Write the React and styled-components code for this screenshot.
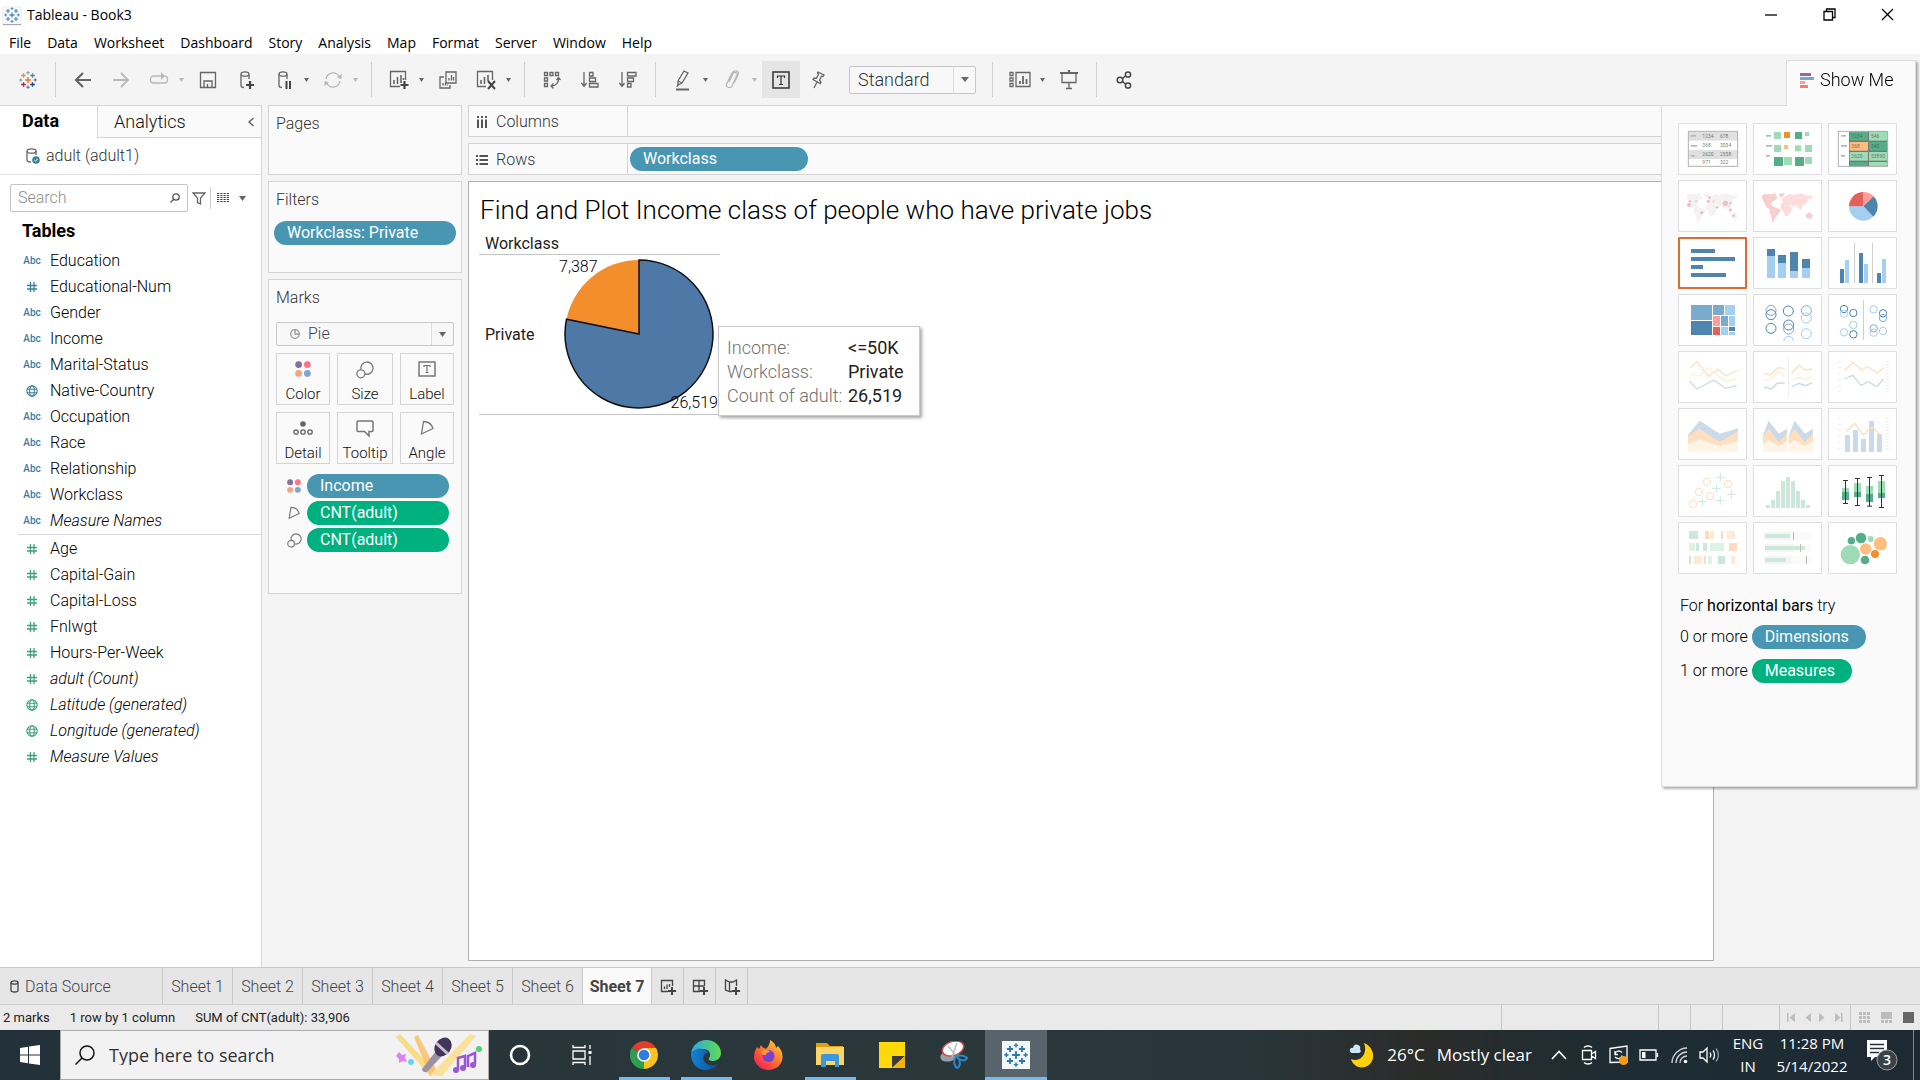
import React from "react";
import styled, { createGlobalStyle } from "styled-components";

const UI = `Roboto, "Liberation Sans", sans-serif`;
const WIN = `"Open Sans", "Noto Sans", sans-serif`;

const BLUE = "#4996b2";
const GREEN = "#00b180";
const LINE = "#d4d4d4";

const Global = createGlobalStyle`
  *, *::before, *::after { box-sizing: border-box; }
  body { margin: 0; background: #f4f4f4; font-family: ${UI}; font-size: 16px; font-weight: 300; line-height: 20px; color: #222; overflow: hidden; }
  button, input, select { font: inherit; color: inherit; margin: 0; }
  button { background: none; border: 0; padding: 0; cursor: pointer; }
  ul { list-style: none; margin: 0; padding: 0; }
  h1, h2, p { margin: 0; font-weight: inherit; font-size: inherit; }
  svg { display: block; flex: none; }
`;

/* ---------- frame ---------- */
const Page = styled.div`
  position: relative;
  height: 100vh;
  display: flex;
  flex-direction: column;
`;
const TitleBar = styled.header`
  height: 29px;
  display: flex;
  align-items: center;
  gap: 6px;
  padding-left: 3px;
  background: #fff;
  color: #000;
  font: 14px/20px ${WIN};
`;
const WindowButtons = styled.div`
  margin: 0 4px 0 auto;
  display: flex;
`;
const WindowButton = styled.button`
  width: 58px;
  height: 28px;
  display: grid;
  place-items: center;
`;
const MenuBar = styled.nav`
  height: 25px;
  display: flex;
  align-items: center;
  padding: 2px 0 0 1px;
  background: #fff;
  font: 14px/20px ${WIN};
  color: #000;
`;
const MenuItem = styled.button`
  padding: 0 8px;
`;
const Toolbar = styled.div`
  height: 51px;
  display: flex;
  align-items: center;
  padding-left: 9px;
  color: #666;
`;
const ToolButton = styled.button`
  width: 38px;
  height: 37px;
  display: grid;
  place-items: center;
  color: ${(p) => (p.$dim ? "#b8b8b8" : "#666")};
  background: ${(p) => (p.$on ? "#e5e5e5" : "none")};
`;
const CaretButton = styled.button`
  width: 11px;
  height: 37px;
  display: grid;
  place-items: center start;
  padding-left: 1px;
  color: ${(p) => (p.$dim ? "#b8b8b8" : "#666")};
`;
const Sep = styled.span`
  width: 1px;
  height: 35px;
  margin: 0 8px;
  background: #d0d0d0;
`;
const SelectBox = styled.label`
  display: flex;
  align-items: center;
  position: relative;
  background: #f8f8f8;
  border: 1px solid #c8c8c8;
  border-radius: 2px;
`;
const FitBox = styled(SelectBox)`
  width: 127px;
  height: 28px;
  margin: 0 8px 0 11px;
  font-size: 18px;
  color: #333;
`;
const PlainSelect = styled.select`
  appearance: none;
  flex: 1;
  min-width: 0;
  height: 100%;
  border: 0;
  outline: 0;
  background: none;
  padding: 0 8px;
`;
const SelectCaret = styled.span`
  width: 22px;
  align-self: stretch;
  display: grid;
  place-items: center;
  border-left: 1px solid #ddd;
  color: #666;
  pointer-events: none;
`;

const Body = styled.div`
  flex: 1;
  min-height: 0;
  display: flex;
`;

/* ---------- data pane ---------- */
const DataPane = styled.aside`
  width: 262px;
  background: #fff;
  border: 1px solid ${LINE};
  border-width: 1px 1px 0 0;
  color: #111;
`;
const PaneTabs = styled.div`
  display: flex;
  height: 32px;
  font-size: 18px;
`;
const PaneTab = styled.button`
  width: 97px;
  padding: 0 0 2px 22px;
  text-align: left;
  font-weight: 700;
  color: #000;
`;
const PaneTabOff = styled.button`
  flex: 1;
  display: flex;
  align-items: center;
  justify-content: space-between;
  padding: 0 6px 0 16px;
  background: #fafafa;
  border: 1px solid ${LINE};
  border-width: 0 0 1px 1px;
  color: #111;
`;
const SourceRow = styled.div`
  height: 37px;
  display: flex;
  align-items: center;
  gap: 6px;
  padding-left: 26px;
  border-bottom: 1px solid #e0e0e0;
  color: #333;
`;
const SearchRow = styled.div`
  display: flex;
  align-items: center;
  padding: 9px 0 0 10px;
`;
const SearchBox = styled.label`
  width: 178px;
  height: 28px;
  display: flex;
  align-items: center;
  padding: 0 7px;
  border: 1px solid #c4c4c4;
  border-radius: 2px;
`;
const SearchInput = styled.input`
  flex: 1;
  min-width: 0;
  border: 0;
  outline: 0;
  padding: 0;
  background: none;
  &::placeholder { color: #8c8c8c; opacity: 1; }
`;
const SmallIconButton = styled.button`
  width: ${(p) => p.$w}px;
  height: 22px;
  display: grid;
  place-items: center;
  color: #666;
  border-left: ${(p) => (p.$line ? "1px solid #ccc" : "0")};
`;
const TablesHeading = styled.h2`
  padding: 9px 22px 7px;
  font-size: 18px;
  font-weight: 700;
  color: #000;
`;
const FieldList = styled.ul`
  margin-left: 18px;
  padding-top: ${(p) => (p.$measures ? 1 : 0)}px;
  border-top: ${(p) => (p.$measures ? "1px solid #d8d8d8" : "0")};
  color: ${(p) => (p.$measures ? "#3fa27c" : "#38809f")};
`;
const Field = styled.li`
  height: 26px;
  display: grid;
  grid-template-columns: 28px 1fr;
  align-items: center;
  column-gap: 4px;
`;
const FieldIcon = styled.span`
  display: grid;
  place-items: center;
  font-size: 10px;
  font-weight: 500;
  line-height: 12px;
`;
const FieldName = styled.span`
  color: #000;
  font-style: ${(p) => (p.$italic ? "italic" : "normal")};
`;

/* ---------- shelf cards ---------- */
const Cards = styled.section`
  width: 194px;
  margin-left: 6px;
  display: flex;
  flex-direction: column;
  gap: 6px;
`;
const Card = styled.div`
  min-height: ${(p) => p.$h}px;
  background: #fafafa;
  border: 1px solid ${LINE};
  padding: 8px 5px;
`;
const CardTitle = styled.h2`
  padding-left: 2px;
  color: #333;
`;
const Pill = styled.button`
  height: 24px;
  display: block;
  padding: 0 ${(p) => p.$end || 13}px 0 13px;
  border-radius: 12px;
  background: ${(p) => (p.$green ? GREEN : BLUE)};
  color: #fff;
  font-weight: 400;
  text-align: left;
  white-space: nowrap;
`;
const FilterPill = styled(Pill)`
  width: 100%;
  margin-top: 11px;
`;
const MarksBody = styled.div`
  padding: 0 2px;
`;
const MarkBox = styled(SelectBox)`
  height: 24px;
  margin: 14px 0 7px;
  padding-left: 13px;
  color: #444;
`;
const MarkGrid = styled.div`
  display: grid;
  grid-template-columns: 54px 56px 54px;
  gap: 7px;
`;
const MarkButton = styled.button`
  height: 52px;
  display: flex;
  flex-direction: column;
  align-items: center;
  justify-content: space-between;
  padding: 7px 0 0;
  border: 1px solid ${LINE};
  font-size: 15px;
  color: #111;
`;
const Encodings = styled.ul`
  margin-top: 10px;
  display: grid;
  gap: 3px;
`;
const Encoding = styled.li`
  display: grid;
  grid-template-columns: 14px 142px;
  gap: 6px;
  align-items: center;
  padding-left: 11px;
`;

/* ---------- worksheet ---------- */
const Work = styled.main`
  flex: 1;
  min-width: 0;
  display: flex;
  flex-direction: column;
  gap: 6px;
  margin: 0 206px 6px 6px;
`;
const Shelf = styled.div`
  height: 32px;
  display: flex;
  align-items: center;
  background: #fafafa;
  border: 1px solid ${LINE};
`;
const ShelfLabel = styled.div`
  width: 159px;
  align-self: stretch;
  display: flex;
  align-items: center;
  gap: 8px;
  padding: 2px 0 0 7px;
  margin-right: 2px;
  border-right: 1px solid ${LINE};
  color: #333;
`;
const ShelfPill = styled(Pill)`
  width: 178px;
`;
const Canvas = styled.div`
  flex: 1;
  background: #fff;
  border: 1px solid #b0b0b0;
  padding: 12px 10px 11px;
`;
const SheetTitle = styled.h1`
  padding-left: 1px;
  font-size: 26px;
  line-height: 32px;
  color: #000;
`;
const Viz = styled.div`
  position: relative;
  width: 241px;
  margin-top: 8px;
  border-bottom: 1px solid #c4c4c4;
`;
const VizHeader = styled.div`
  height: 21px;
  padding-left: 6px;
  border-bottom: 1px solid #c4c4c4;
  font-weight: 400;
`;
const VizRow = styled.div`
  display: grid;
  grid-template-columns: 73px 1fr;
  align-items: center;
  padding-left: 6px;
`;
const VizLabel = styled.span`
  font-weight: 400;
`;
const Tip = styled.dl`
  position: absolute;
  left: 239px;
  top: 92px;
  width: 202px;
  height: 90px;
  margin: 0;
  padding: 9px 8px;
  display: grid;
  grid-template-columns: 121px 1fr;
  grid-auto-rows: 24px;
  align-items: center;
  background: #fff;
  border: 1px solid #c8c8c8;
  box-shadow: 2px 2px 3px rgba(0, 0, 0, 0.35);
  font-size: 18px;
  white-space: nowrap;
`;
const TipKey = styled.dt`
  color: #707070;
`;
const TipValue = styled.dd`
  margin: 0;
  font-weight: 400;
`;

/* ---------- show me ---------- */
const ShowMe = styled.section`
  position: absolute;
  top: 60px;
  right: 4px;
  width: 255px;
  display: flex;
  flex-direction: column;
  filter: drop-shadow(2px 2px 1px rgba(0, 0, 0, 0.3));
  color: #000;
`;
const ShowMeTab = styled.button`
  align-self: flex-end;
  width: 130px;
  height: 46px;
  margin-bottom: -1px;
  z-index: 1;
  display: flex;
  align-items: center;
  gap: 6px;
  padding: 0 0 7px 13px;
  background: #fafafa;
  border: 1px solid #dcdcdc;
  border-bottom: 0;
  font-size: 18px;
`;
const ShowMePanel = styled.div`
  min-height: 682px;
  padding: 17px 16px;
  background: #fafafa;
  border: 1px solid #dcdcdc;
`;
const ThumbGrid = styled.div`
  display: grid;
  grid-template-columns: repeat(3, 69px);
  gap: 5px 6px;
  margin-bottom: 18px;
`;
const Thumb = styled.button`
  height: 52px;
  background: #fff;
  box-shadow: inset 0 0 0 ${(p) => (p.$on ? "2px #dd6b36" : "1px #dedede")};
  border-radius: 1px;
`;
const Hint = styled.p`
  display: flex;
  align-items: center;
  gap: 4px;
  padding-left: 2px;
  height: ${(p) => p.$h || 34}px;
`;

/* ---------- sheet tabs and status ---------- */
const SheetTabs = styled.nav`
  height: 37px;
  display: flex;
  background: #e6e6e6;
  border-top: 1px solid #c8c8c8;
  color: #444;
`;
const SheetTab = styled.button`
  min-width: ${(p) => p.$w}px;
  display: flex;
  align-items: center;
  justify-content: ${(p) => (p.$start ? "flex-start" : "center")};
  gap: 6px;
  padding: 1px ${(p) => (p.$start ? 10 : 0)}px 0;
  border-right: 1px solid #c8c8c8;
  background: ${(p) => (p.$on ? "#fafafa" : "none")};
  font-weight: ${(p) => (p.$on ? 700 : 300)};
`;
const StatusBar = styled.footer`
  height: 26px;
  display: flex;
  align-items: center;
  gap: 20px;
  padding-left: 3px;
  background: #eaeaea;
  border-top: 1px solid #d0d0d0;
  font-size: 13px;
  font-weight: 400;
`;
const StatusCells = styled.div`
  margin-left: auto;
  align-self: stretch;
  display: flex;
`;
const StatusCell = styled.div`
  width: ${(p) => p.$w}px;
  display: flex;
  align-items: center;
  justify-content: ${(p) => (p.$spread ? "space-between" : "space-evenly")};
  padding: 0 ${(p) => (p.$spread ? 6 : 0)}px 0 ${(p) => (p.$spread ? 8 : 0)}px;
  border-left: 1px solid #c4c4c4;
  color: #bcbcbc;
`;

/* ---------- taskbar ---------- */
const Taskbar = styled.footer`
  height: 50px;
  display: flex;
  background: linear-gradient(90deg, #22313a, #2a373b 40%, #28353a 65%, #2b2c2a 74%, #1e2c34 84%, #1d2a33);
  color: #fff;
  font-family: ${WIN};
  font-weight: 400;
`;
const StartButton = styled.button`
  width: 60px;
  display: grid;
  place-items: center;
`;
const TaskSearch = styled.label`
  width: 429px;
  display: flex;
  align-items: center;
  gap: 14px;
  padding: 0 4px 0 14px;
  background: #f2f2f2;
  border: 1px solid #a9a9a9;
  color: #222;
`;
const TaskInput = styled.input`
  flex: 1;
  min-width: 0;
  border: 0;
  outline: 0;
  padding: 0;
  background: none;
  font-size: 18px;
  &::placeholder { color: #333; opacity: 1; }
`;
const TaskApp = styled.button`
  width: 62px;
  display: grid;
  place-items: center;
  background: ${(p) => (p.$on ? "#57646b" : "none")};
  background-image: ${(p) => (p.$run ? "linear-gradient(#76b9ed, #76b9ed)" : "none")};
  background-size: ${(p) => (p.$on ? 62 : 51)}px 3px;
  background-position: bottom center;
  background-repeat: no-repeat;
`;
const Tray = styled.div`
  margin-left: auto;
  display: flex;
  align-items: center;
`;
const Weather = styled.button`
  display: flex;
  align-items: center;
  gap: 12px;
  margin-right: 12px;
  font-size: 17px;
  color: #fff;
`;
const TrayIcon = styled.button`
  width: 30px;
  height: 50px;
  display: grid;
  place-items: center;
  color: #fff;
`;
const TrayText = styled.button`
  width: ${(p) => p.$w}px;
  color: #fff;
  font-size: ${(p) => p.$size || 16}px;
  line-height: 23px;
`;
const Notify = styled.button`
  width: 62px;
  display: grid;
  place-items: center;
  padding-right: 2px;
  margin-right: 6px;
  height: 50px;
  border-right: 1px solid #7d868a;
`;

/* ---------- icons ---------- */
const Svg = ({ w = 18, h = w, vb, sw = 1.3, children, ...rest }) => (
  <svg width={w} height={h} viewBox={vb || `0 0 ${w} ${h}`} fill="none" stroke="currentColor" strokeWidth={sw} aria-hidden="true" {...rest}>
    {children}
  </svg>
);
const Caret = ({ w = 5 }) => (
  <svg width={w} height={w === 5 ? 4 : 5} viewBox="0 0 8 5" preserveAspectRatio="none" fill="currentColor" aria-hidden="true"><path d="M0 0h8L4 5z" /></svg>
);
const plus = (x, y, r, c, key, s = 1.2) => (
  <path key={key} d={`M${x - r} ${y}h${2 * r}M${x} ${y - r}v${2 * r}`} stroke={c} strokeWidth={s} />
);
const TableauMark = ({ size = 18, mono }) => {
  const c = mono ? Array(9).fill(mono) : ["#e8762c", "#5b879b", "#eb912c", "#59879b", "#c72035", "#1f447e", "#7099a6", "#5c6692", "#7199a6"];
  return (
    <Svg w={size} vb="0 0 20 20">
      {plus(10, 10, 3.2, c[0], "a", 1.6)}
      {plus(10, 2, 1.8, c[6], "b")}
      {plus(10, 18, 1.8, c[7], "c")}
      {plus(2, 10, 1.8, c[8], "d")}
      {plus(18, 10, 1.8, c[7], "e")}
      {plus(5, 5, 2.6, c[2], "f", 1.5)}
      {plus(15, 5, 2.6, c[3], "g", 1.5)}
      {plus(5, 15, 2.6, c[4], "h", 1.5)}
      {plus(15, 15, 2.6, c[5], "i", 1.5)}
    </Svg>
  );
};
const AppBadge = styled.span`
  width: 18px;
  height: 18px;
  display: grid;
  place-items: center;
  background: #f4f6f8;
  box-shadow: 0 1px 1px #aaa;
`;
const Dots = ({ w = 16 }) => (
  <svg width={w} height={w} viewBox="0 0 16 16" aria-hidden="true">
    <circle cx="3.6" cy="3.6" r="3.4" fill="#866f9c" /><circle cx="12.4" cy="3.6" r="3.4" fill="#fc7480" />
    <circle cx="3.6" cy="12.4" r="3.4" fill="#f3a57d" /><circle cx="12.4" cy="12.4" r="3.4" fill="#7fa5cf" />
  </svg>
);
const SizeIcon = ({ w = 18 }) => (
  <Svg w={w} vb="0 0 18 18" color="#777"><path d="M5 8.4A6.1 6.1 0 1 1 9 12.9" /><circle cx="4.9" cy="12.8" r="4" /></Svg>
);
const AngleIcon = ({ w = 16 }) => (
  <Svg w={w} vb="0 0 16 16" color="#777"><path d="M4.500 1.500 2.500 14 14 8.500C12.500 4 8.500 1.500 4.500 1.500z" /></Svg>
);
const Hash = () => <Svg w={12} sw={1.3}><path d="M4.500 1v10M8 1v10M1 4.500h10M1 8h10" /></Svg>;
const Globe = () => (
  <Svg w={12} sw={1.1}><circle cx="6" cy="6" r="5.200" /><ellipse cx="6" cy="6" rx="2.300" ry="5.200" /><path d="M1 4.200h10M1 7.800h10" /></Svg>
);
const DbSmall = ({ children, ...p }) => (
  <Svg w={20} h={20} {...p}>
    <path d="M5 4.200v11.600c0 1 1.200 1.600 3 1.700M13 4.200V9" /><ellipse cx="9" cy="4" rx="4" ry="2.200" />{children}
  </Svg>
);
const PlusBadge = ({ x, y }) => <path d={`M${x - 4} ${y}h8M${x} ${y - 4}v8`} strokeWidth="2.200" stroke="#444" />;

const I = {
  back: <Svg w={18} sw={2.200}><path d="M17 9H2M9 2 2 9l7 7" /></Svg>,
  fwd: <Svg w={18} sw={1.800}><path d="M1 9h15M9 2l7 7-7 7" /></Svg>,
  redo: <Svg w={20}><path d="M11 6H4.500a3 3 0 0 0-3 3v1a3 3 0 0 0 3 3h11a3 3 0 0 0 3-3V9a3 3 0 0 0-2.500-3M11 6h4" /><path d="m12 2 4 4-4 4z" fill="currentColor" stroke="none" /></Svg>,
  save: <Svg w={18}><path d="M1.500 1.500h15v15h-15z" /><path d="M5 16v-6h8v6M8.500 16v-3" /></Svg>,
  dbplus: <DbSmall><PlusBadge x={14} y={15} /></DbSmall>,
  dbpause: <DbSmall><path d="M12.500 11v8M16 11v8" stroke="#444" strokeWidth="2" /></DbSmall>,
  refresh: <Svg w={18}><path d="M2 8a7 7 0 0 1 13-2.500M16 10a7 7 0 0 1-13 2.500" /><path d="M17.500 3v5l-4.500-1.500zM.5 15v-5L5 11.500z" fill="currentColor" stroke="none" /></Svg>,
  newws: <Svg w={20}><path d="M11 16.500H1.500v-15h15V10" /><path d="M5 14v-4M8.500 14V7M12 13V5M14.500 10V8" strokeWidth="1.600" /><PlusBadge x={15.5} y={15} /></Svg>,
  dup: <Svg w={18}><path d="M7 1h10v11H7z" /><path d="M5 6H1v11h10v-3M10 9.500V7M12.500 9.500V4M14.500 9.500V6M4 14.500V12M6.500 14.500v-3M8.500 14.500v-1" /></Svg>,
  clear: <Svg w={20}><path d="M10 16.500H1.500v-15h15V10" /><path d="M5 14v-4M8.500 14V7M12 11V5" strokeWidth="1.600" /><path d="m12 11 7 8m0-8-7 8" stroke="#444" strokeWidth="2" /></Svg>,
  swap: <Svg w={18}><path d="M1.500 1.500h3v3h-3zM7 1.500h3v3H7zM12.500 1.500h3v3h-3zM1.500 7h3v3h-3zM1.500 12.500h3v3h-3z" /><path d="M15.500 7c.5 5-3 8-7 8M13.500 9l2-2.500 2 2.500M10.500 12.500 8 15l2.500 2.500" /></Svg>,
  asc: <Svg w={18}><path d="M3 1v14M.5 12 3 15.500 5.500 12M8.500 1.500h3.500V5H8.500zM8.500 7h6v3.500h-6zM8.500 12.500H17V16H8.500z" /></Svg>,
  desc: <Svg w={18}><path d="M3 1v14M.5 12 3 15.500 5.500 12M8.500 1.500H17V5H8.500zM8.500 7h6v3.500h-6zM8.500 12.500H12V16H8.500z" /></Svg>,
  pen: <Svg w={18} h={22}><path d="m4 12 6-10 4 2-6 10-4 2zM4 12l4 2" /><path d="M4 15.500 3 18" /><path d="M2 20.500h13" strokeWidth="2" /></Svg>,
  clip: <Svg w={16} h={20}><path d="m5 12 4-8.500c1-2 5-1 4 1.500L8 16c-1.500 3-7 1-5.500-2L8 3c1-2.500 6-3 6.500 0 .3 1.500-4 9-4.500 10" /></Svg>,
  label: <Svg w={18} color="#333" sw={1.500}><path d="M1 1h16v16H1z" /><path d="M5.500 7V5h7v2M9 5v8.500M7 13.500h4" strokeWidth="1.200" /></Svg>,
  pin: <Svg w={16} h={20}><path d="m7 2 6 3-1 1.500-1.500-.3-2 4 1.500 2-.7 1.300L2 9.500 3 8l2.500.3 2-4L6.500 3zM6 12l-3 6" /></Svg>,
  cards: <Svg w={22} h={18}><path d="M1 1.500h3v3H1zM1 7h3v3H1zM1 12.500h3v3H1zM7 1.500h14v14H7z" /><path d="M11 13v-3M14 13V5M17.500 13V8" strokeWidth="1.800" /></Svg>,
  present: <Svg w={18} h={20}><path d="M0 3h18M9 0v3" strokeWidth="2.200" /><path d="M2 4v8.500h14V4M9 12.500V18M6 18.500h6" /></Svg>,
  share: <Svg w={16} h={20} color="#444" sw={1.500}><circle cx="4" cy="10" r="2.800" /><circle cx="12" cy="4.500" r="2.600" /><circle cx="12" cy="15.500" r="2.600" /><path d="m6.500 8.500 3-2.500M6.500 11.500l3 2.500" /></Svg>,
};
const tools = [
  ["Start page", <TableauMark />, "s"],
  ["Back", I.back], ["Forward", I.fwd, "d"], ["Redo", I.redo, "dc"], ["Save", I.save], ["New data source", I.dbplus],
  ["Pause updates", I.dbpause, "c"], ["Refresh", I.refresh, "dcs"],
  ["New worksheet", I.newws, "c"], ["Duplicate", I.dup], ["Clear sheet", I.clear, "cs"],
  ["Swap rows and columns", I.swap], ["Sort ascending", I.asc], ["Sort descending", I.desc, "s"],
  ["Highlight", I.pen, "c"], ["Group members", I.clip, "dc"], ["Show mark labels", I.label, "o"], ["Fix axes", I.pin],
];
const tools2 = [["Show cards", I.cards, "c"], ["Presentation mode", I.present, "s"], ["Share", I.share]];
const Tool = ({ item: [label, icon, f = ""] }) => (
  <>
    <ToolButton aria-label={label} $dim={f.includes("d")} $on={f.includes("o")}>{icon}</ToolButton>
    {f.includes("c") && <CaretButton aria-label={`${label} options`} $dim={f.includes("d")}><Caret /></CaretButton>}
    {f.includes("s") && <Sep />}
  </>
);

/* ---------- show me thumbnails, drawn in a 207 x 156 space ---------- */
const D = "#4e84ae", M = "#7baacf", L = "#a4cff0", G = "#55ad89", g = "#9edcb5", O = "#f28e2b", o = "#ffbe7d";
const rects = (list) => list.map(([x, y, w, h, c], i) => <rect key={i} x={x} y={y} width={w} height={h} fill={c} />);
const lines = (list, w = 4) => list.map(([pts, c], i) => <polyline key={i} points={pts} fill="none" stroke={c} strokeWidth={w} />);
const polys = (list, dx = 0) => list.map(([pts, c], i) => <polygon key={i} points={pts} fill={c} transform={`translate(${dx} 0)`} />);
const rings = (list, r, w = 3) => list.map(([x, y, c], i) => <circle key={i} cx={x} cy={y} r={r} fill="none" stroke={c} strokeWidth={w} />);
const words = (list) => list.map(([x, y, t], i) => <text key={i} x={x} y={y} fontSize="15" fontWeight="400" fill="#555" fillOpacity=".8">{t}</text>);
const dashes = (list) => list.map(([x, y, w], i) => <rect key={i} x={x} y={y} width={w} height="5" fill="#b5b5b5" />);
const ticks = [...Array(6)].map((_, i) => [30, 30 + i * 18, 9, 2, "#e6e6e6"]).concat([...Array(11)].map((_, i) => [174, 30 + i * 9, 9, 2, "#e6e6e6"]));
const west = "M26 48l8-6 22 1 8-3 6 2-3 6 8 4-8 8-6 2-8 10 4 5 6 4 16 6 4 6-10 12-8 12-3 10-4-1-3-16-6-12 3-8-12-10-8-14-4-8zM76 41l20-1-6 10-8 2z";
const east = "M92 52l12-6 8-4 10 3 20-5 18 6 20 2-4 8-10 0-4 12-12 6-4 12-8 2-4-8-6-6-4 10-8-10-6 0 6 10-4 14-10 10-6 0-6-16-8-6 2-14 6-6-4-6z";
const oz = "M158 104l12-8 10 12-6 8-14-2z";
const sliceOf = (cx, cy, r, a, b) => {
  const p = (d) => `${cx + r * Math.sin((d * Math.PI) / 180)} ${cy - r * Math.cos((d * Math.PI) / 180)}`;
  return `M${cx} ${cy}L${p(a)}A${r} ${r} 0 ${b - a > 180 ? 1 : 0} 1 ${p(b)}z`;
};
const lOr = "#ffdfbf", lYe = "#fff0d3", lBl = "#cbdae8", lGr = "#cce8db", pGr = "#def2e7", pOr = "#ffead6";
const twin = [["30,81 47,38 78,77 102,62 102,132 30,132", lBl], ["30,86 47,62 78,103 102,76 102,132 30,132", lOr], ["30,108 47,96 78,114 102,99 102,132 30,132", "#fff4e6"]];
const thumbs = [
  ["Text table", <>{rects([[31, 26, 148, 27, "#e0e0e0"], [31, 81, 148, 27, "#e0e0e0"]])}{dashes([[38, 36, 16], [38, 66, 19], [38, 96, 13]])}{words([[73, 46, "1234"], [126, 46, "678"], [73, 73, "368"], [126, 73, "3034"], [73, 100, "2620"], [126, 100, "2558"], [73, 124, "971"], [126, 124, "322"]])}<rect x="31" y="25" width="148" height="105" fill="none" stroke="#b0b0b0" strokeWidth="3" /></>],
  ["Heat map", <>{dashes([[39, 36, 15], [39, 66, 18], [39, 96, 12]])}{rects([[63, 27, 21, 21, g], [93, 27, 18, 18, O], [126, 27, 21, 21, G], [156, 27, 12, 12, g], [63, 66, 21, 21, g], [93, 66, 12, 12, o], [126, 67, 18, 18, g], [156, 66, 21, 21, g], [63, 102, 27, 27, G], [93, 102, 24, 24, g], [126, 102, 27, 27, G], [156, 102, 21, 21, g]])}</>],
  ["Highlight table", <>{rects([[63, 25, 116, 106, "#777"], [65, 27, 55, 26, G], [123, 27, 55, 26, g], [65, 57, 55, 26, o], [123, 57, 55, 26, G], [65, 87, 55, 26, g], [123, 87, 55, 26, g], [65, 117, 55, 13, G], [123, 117, 55, 13, g]])}{dashes([[39, 36, 15], [39, 66, 18], [39, 96, 12]])}{words([[70, 45, "1234"], [129, 45, "546"], [70, 76, "368"], [129, 76, "340"], [70, 106, "2620"], [129, 106, "53890"]])}<rect x="31" y="25" width="148" height="105" fill="none" stroke="#b0b0b0" strokeWidth="3" /></>],
  ["Symbol map", <><path d={west + east + oz} fill="#f3f3f3" />{[[33, 75, 6], [36, 64, 4], [55, 64, 5], [94, 52, 4], [91, 64, 5], [106, 64, 5], [142, 70, 8], [157, 70, 4], [153, 78, 4], [157, 90, 5], [117, 82, 4], [53, 92, 3], [71, 98, 5], [167, 107, 4]].map(([x, y, r], i) => <circle key={i} cx={x} cy={y} r={r} fill={i % 3 === 2 ? "#fcd6d6" : "#efc0c5"} />)}</>],
  ["Filled map", <><path d={west} fill="#f7cfce" /><path d={east} fill="#fddddc" /><path d={oz} fill="#f7cfce" /></>],
  ["Pie chart", <><path d={sliceOf(106, 79, 43, 0, 45)} fill="#ff9d9a" /><path d={sliceOf(106, 79, 43, 45, 137)} fill={D} /><path d={sliceOf(106, 79, 43, 137, 270)} fill={L} /><path d={sliceOf(106, 79, 43, 270, 360)} fill="#e2625b" /></>],
  ["Horizontal bars", rects([[39, 36, 72, 12, D], [39, 60, 132, 12, D], [39, 84, 36, 12, D], [39, 108, 105, 12, D]])],
  ["Stacked bars", rects([[42, 36, 24, 21, D], [42, 57, 24, 66, L], [75, 54, 24, 24, D], [75, 78, 24, 45, L], [111, 45, 24, 57, D], [111, 102, 24, 21, L], [147, 66, 24, 27, D], [147, 93, 24, 30, L]])],
  ["Side-by-side bars", rects([[36, 96, 12, 42, D], [51, 69, 12, 69, L], [78, 18, 3, 120, "#d0d0d0"], [93, 48, 12, 90, D], [108, 81, 12, 57, L], [132, 18, 3, 120, "#d0d0d0"], [147, 108, 12, 30, D], [162, 66, 12, 72, L]])],
  ["Treemap", rects([[39, 33, 63, 45, M], [39, 81, 63, 42, D], [105, 33, 33, 30, M], [141, 33, 30, 30, L], [105, 66, 21, 30, "#ff9d9a"], [129, 66, 21, 30, M], [153, 66, 18, 30, L], [105, 99, 21, 24, "#e2625b"], [129, 99, 21, 24, L], [153, 99, 18, 12, D], [153, 114, 18, 9, L]])],
  ["Circle views", <>{rings([[54, 49, M], [54, 62, D], [54, 103, D], [106, 51, D], [107, 93, D], [107, 105, M], [160, 50, M], [160, 72, L], [160, 119, L]], 15)}<path d="M93 141a14 14 0 0 1 28 0" fill="none" stroke={L} strokeWidth="3" /></>],
  ["Side-by-side circles", <>{rings([[48, 45, D], [48, 59, L], [76, 57, D], [76, 93, L], [48, 115, L], [76, 121, D], [137, 46, L], [165, 58, D], [165, 72, M], [137, 103, M], [137, 116, L], [165, 111, L]], 11)}{rects([[105, 18, 3, 120, "#d0d0d0"]])}</>],
  ["Lines, continuous", lines([["37,50 57,32 91,76 120,54 142,75 176,59", lOr], ["36,68 62,75 91,51 142,91 176,84", lYe], ["34,91 57,114 107,87 143,112 176,104", lBl]])],
  ["Lines, discrete", <>{lines([["33,67 54,71 74,50 95,52", lOr], ["33,87 54,84 74,61 95,76", lYe], ["33,108 54,114 74,96 95,96", lBl], ["116,67 137,43 158,57 177,54", lOr], ["116,87 137,79 158,85 177,75", lYe], ["116,108 137,97 158,104 177,95", lBl]])}{rects([[105, 18, 3, 120, "#eee"]])}</>],
  ["Dual lines", <>{rects(ticks)}{lines([["49,60 74,34 100,57 119,47 147,66 166,51", lOr], ["49,84 74,73 100,104 119,92 147,107 166,84", lBl]])}</>],
  ["Area, continuous", polys([["30,81 65,38 125,77 180,61 180,132 30,132", lBl], ["30,84 65,62 125,102 180,70 180,132 30,132", lOr], ["30,108 65,94 125,114 180,99 180,132 30,132", "#fff4e6"]])],
  ["Area, discrete", <>{polys(twin)}{polys(twin, 78)}</>],
  ["Dual combination", <>{rects(ticks)}{rects([[51, 81, 15, 51, lBl], [75, 66, 15, 66, lBl], [99, 93, 15, 39, lBl], [123, 39, 15, 93, lBl], [147, 78, 15, 54, lBl]])}{lines([["55,70 80,46 106,81 132,57 158,81", lOr]])}</>],
  ["Scatter plot", <>{rings([[45, 117, lOr], [63, 81, lOr], [87, 51, lOr], [96, 93, lOr], [150, 57, lOr]], 11)}{[[73, 110], [115, 70], [127, 37], [127, 106], [160, 88]].map(([x, y], i) => plus(x, y, 13, lGr, i, 3))}</>],
  ["Histogram", rects([120, 105, 78, 48, 36, 48, 78, 105, 120].map((y, i) => [39 + i * 15, y, 12, 129 - y, lGr]))],
  ["Box plot", [[42, 69, 81, 105, 46, 116], [78, 54, 81, 96, 40, 122], [114, 63, 87, 111, 37, 124], [150, 48, 84, 99, 31, 128]].map(([x, a, b, c, t, e]) => (
    <React.Fragment key={x}>{rects([[x, a, 21, b - a, g], [x, b, 21, c - b, G], [x + 9, t, 3, e - t, "#333"], [x + 3, t - 1, 15, 3, "#333"], [x + 3, e - 2, 15, 3, "#333"]])}</React.Fragment>))],
  ["Gantt chart", rects([[33, 27, 27, 24, lGr], [81, 27, 12, 24, "#fcdcc0"], [96, 27, 12, 24, pOr], [129, 27, 6, 24, "#fcdcc0"], [147, 27, 24, 24, pOr], [33, 63, 18, 24, pGr], [54, 63, 9, 24, lGr], [75, 63, 12, 24, lGr], [96, 63, 42, 24, pGr], [153, 63, 24, 24, "#fcdcc0"], [33, 102, 6, 24, lGr], [48, 102, 24, 24, pOr], [78, 102, 6, 24, "#fcdcc0"], [90, 102, 12, 24, pGr], [120, 102, 21, 24, lGr], [159, 102, 12, 24, pOr]])],
  ["Bullet graph", rects([[36, 30, 138, 24, "#fafafa"], [36, 30, 75, 24, "#f4f4f4"], [36, 66, 138, 24, "#fafafa"], [36, 66, 84, 24, "#f4f4f4"], [36, 102, 138, 24, "#fafafa"], [36, 102, 78, 24, "#f4f4f4"], [36, 36, 75, 12, lGr], [36, 72, 120, 12, lGr], [36, 108, 63, 12, lGr], [120, 30, 3, 24, "#bbb"], [141, 66, 3, 24, "#bbb"], [159, 102, 3, 24, "#bbb"]])],
  ["Packed bubbles", [[67, 98, 29, g], [70, 56, 11, G], [99, 48, 16, G], [128, 51, 9, g], [157, 65, 20, o], [113, 81, 17, o], [141, 96, 12, O], [111, 114, 13, G]].map(([x, y, r, c], i) => <circle key={i} cx={x} cy={y} r={r} fill={c} />)],
];

/* ---------- data ---------- */
const dimensions = [["Education"], ["Educational-Num", "#"], ["Gender"], ["Income"], ["Marital-Status"], ["Native-Country", "g"], ["Occupation"], ["Race"], ["Relationship"], ["Workclass"], ["Measure Names", "", 1]];
const measures = [["Age", "#"], ["Capital-Gain", "#"], ["Capital-Loss", "#"], ["Fnlwgt", "#"], ["Hours-Per-Week", "#"], ["adult (Count)", "#", 1], ["Latitude (generated)", "g", 1], ["Longitude (generated)", "g", 1], ["Measure Values", "#", 1]];
const Fields = ({ items, m }) => (
  <FieldList $measures={m}>
    {items.map(([name, kind, it]) => (
      <Field key={name}>
        <FieldIcon>{kind === "#" ? <Hash /> : kind === "g" ? <Globe /> : "Abc"}</FieldIcon>
        <FieldName $italic={it}>{name}</FieldName>
      </Field>
    ))}
  </FieldList>
);
const counts = { high: 7387, low: 26519 };
const lowAngle = (360 * counts.low) / (counts.low + counts.high);

const markButtons = [
  ["Color", <Dots />],
  ["Size", <SizeIcon />],
  ["Label", <Svg w={18} h={16} color="#777" sw={1.5}><path d="M1 1h16v14H1z" /><path d="M6 6V4.500h6V6M9 4.500v7M7.500 11.500h3" strokeWidth="1.200" /></Svg>],
  ["Detail", <Svg w={20} h={16} color="#666"><circle cx="10" cy="4" r="2.800" fill="currentColor" stroke="none" /><circle cx="3" cy="12" r="2.200" /><circle cx="10" cy="12" r="2.200" /><circle cx="17" cy="12" r="2.200" /></Svg>],
  ["Tooltip", <Svg w={18} h={18} color="#777" sw={1.500}><path d="M2 1h14a1 1 0 0 1 1 1v8.500a1 1 0 0 1-1 1h-3V16l-4.500-4.500H2a1 1 0 0 1-1-1V2a1 1 0 0 1 1-1z" /></Svg>],
  ["Angle", <AngleIcon />],
];

/* ---------- taskbar art ---------- */
const Concert = () => (
  <svg width="90" height="46" viewBox="0 0 90 46" aria-hidden="true">
    <path d="M2 5 6 2l36 38-6 4z" fill="#f8dc86" /><path d="m20 5 4-2 20 38-8 3z" fill="#f9bd62" opacity=".8" /><path d="m76 2 6 2-34 40-12-1z" fill="#fbe19a" />
    <path d="m28 37 14-18 6 5-15 16q-4 1-5-3z" fill="#9b93a5" /><ellipse cx="49" cy="15" rx="8" ry="10" transform="rotate(35 49 15)" fill="#443659" /><path d="m42 11 12 11" stroke="#c9c3d2" strokeWidth="3" />
    <path d="m5 20 3 3 4-1-1 4 2 4-4-1-4 2 0-4-3-3z" fill="#e182f3" /><circle cx="17" cy="30" r="3" fill="#65d5ea" /><circle cx="85" cy="17" r="3" fill="#4fd27e" />
    <path d="M64 37V26l7-2v11M74 35V24l7-3v11" fill="none" stroke="#9a55d8" strokeWidth="2.500" /><circle cx="62" cy="38" r="3" fill="#9a55d8" /><circle cx="69" cy="36" r="3" fill="#9a55d8" /><circle cx="79" cy="33" r="3" fill="#9a55d8" />
  </svg>
);
const Chrome = () => (
  <svg width="28" height="28" viewBox="0 0 28 28" aria-hidden="true">
    <path d="M14 14 1.880 7A14 14 0 0 1 26.120 7z" fill="#e33b2e" /><path d="M14 14 26.120 7A14 14 0 0 1 14 28z" fill="#fcc31e" /><path d="M14 14v14A14 14 0 0 1 1.880 7z" fill="#2f9e4f" />
    <path d="M14 7h12.100L20 17.500 14 28z" fill="#fcc31e" /><path d="M1.900 7 8 17.500 14 21 13 28A14 14 0 0 1 1.900 7z" fill="#2f9e4f" />
    <circle cx="14" cy="14" r="6.800" fill="#fff" /><circle cx="14" cy="14" r="5.300" fill="#2f7de1" />
  </svg>
);
const Edge = () => (
  <svg width="30" height="30" viewBox="0 0 30 30" aria-hidden="true">
    <defs>
      <linearGradient id="edgeTop" x1="0" x2="1"><stop stopColor="#2aa7e8" /><stop offset="1" stopColor="#62dc50" /></linearGradient>
      <linearGradient id="edgeLow" x1="0" x2="1"><stop stopColor="#1583d8" /><stop offset="1" stopColor="#0a4a92" /></linearGradient>
    </defs>
    <path d="M0 14C1 5 8 0 15 0c9 0 15 6 15 13 0 5-4 8-8 8-4 0-5-2-4-3 3-4 0-9-6-9-6 0-11 2-12 5z" fill="url(#edgeTop)" />
    <path d="M0 14c2-4 6-6 11-5 4 .5 6 3 6 4-5 0-6 6-3 9.500 4 4 10 4 14 0-3 5-8 7.500-13 7.500C6 30 0 23 0 14z" fill="url(#edgeLow)" />
  </svg>
);
const Firefox = () => (
  <svg width="29" height="30" viewBox="0 0 29 30" aria-hidden="true">
    <defs><linearGradient id="fox" x1="1" y1="0" x2=".2" y2="1"><stop stopColor="#ffe14a" /><stop offset=".5" stopColor="#ff7a2b" /><stop offset="1" stopColor="#f5195a" /></linearGradient></defs>
    <path d="M16 0c5 3 6 6 6 8l2-2c3 3 5 7 4.500 12C28 25 22 30 14.500 30S0 24 0 17c0-5 2-8 3-10l2 2c1-1 1-3 2-4 1 2 2 3 5 4 2-2 4-5 4-9z" fill="url(#fox)" />
    <circle cx="14.500" cy="16" r="6" fill="#7a3fd4" /><path d="M7 12c3-3 7-3 9 0-2 0-4 1-4 3-3 0-5-1-5-3z" fill="#ff9a2b" />
  </svg>
);
const Explorer = () => (
  <svg width="28" height="26" viewBox="0 0 28 26" aria-hidden="true">
    <path d="M0 1h11l3 3h13v5H0z" fill="#e0a010" /><path d="M0 5h28v18H0z" fill="#fbd667" /><path d="M5 14q0-2 2-2h14q2 0 2 2v11h-4v-6h-9v6H5z" fill="#3b98dc" />
  </svg>
);
const Sticky = () => (
  <svg width="26" height="26" viewBox="0 0 26 26" aria-hidden="true"><path d="M0 0h26v26H0z" fill="#ffd90a" /><path d="M13 26V14h13z" fill="#3a3a3a" /><path d="M13 26 26 14v12z" fill="#f0b412" /></svg>
);
const Snip = () => (
  <svg width="28" height="28" viewBox="0 0 28 28" aria-hidden="true">
    <ellipse cx="10" cy="14" rx="10" ry="6" fill="#9a9fa5" transform="rotate(-20 10 14)" /><ellipse cx="13" cy="7.500" rx="11" ry="7" fill="#fff" stroke="#d64545" strokeWidth="1.500" transform="rotate(-18 13 7.500)" />
    <path d="m8 5 10 12M17 2l-5 14" stroke="#b9bdc2" strokeWidth="1.500" /><path d="M16 15c5-1 8-1 11 2-2 4-7 3-11-2zM16 15c-3 5-2 10 1 12 4-2 4-8-1-12z" fill="none" stroke="#2a87c8" strokeWidth="2" />
  </svg>
);
const TableauTile = () => (
  <svg width="28" height="28" viewBox="0 0 28 28" aria-hidden="true"><path d="M0 0h28v28H0z" fill="#f3f5f7" /><g transform="translate(2 2)"><TableauMark size={24} mono="#2b7ba8" /></g></svg>
);
const apps = [
  ["Cortana", <Svg w={22} sw={2.600} color="#fff"><circle cx="11" cy="11" r="9" /></Svg>],
  ["Task View", <Svg w={20} h={20} color="#fff"><path d="M1 6h12v8H1zM1 0v2.500h12V0M1 20v-2.500h12V20M18 0v4M18 11v9" /><path d="M18 6v3" strokeWidth="3" /></Svg>],
  ["Chrome", <Chrome />, 1], ["Edge", <Edge />, 1], ["Firefox", <Firefox />], ["File Explorer", <Explorer />, 1],
  ["Sticky Notes", <Sticky />], ["Snipping Tool", <Snip />], ["Tableau", <TableauTile />, 1, 1],
];
const trayIcons = [
  ["Hidden icons", <Svg w={16} h={10} sw={1.600}><path d="m1 9 7-7.500L15 9" /></Svg>],
  ["Meet Now", <Svg w={16} h={20}><path d="M1.500 5.500h9v9h-9zM10.500 9l4-2.500v7l-4-2.500M3 2.500c2-2 6-2 8 0M3 17.500c2 2 6 2 8 0" /></Svg>],
  ["Updates", <Svg w={22} h={20}><path d="M2 3.500 19 1v16L2 17.500z" /><path d="M14 7.500c-3-3-7-1-7 2M7 6v3.500h3M7 12c3 3 7 1 7-1.500" /><circle cx="15.500" cy="15.500" r="4.500" fill="#ff9a10" stroke="none" /></Svg>],
  ["Battery", <Svg w={20} h={12}><path d="M1 1h16v10H1zM18.500 4v4" /><path d="M3 3h3.500v6H3z" fill="currentColor" stroke="none" /></Svg>],
  ["Network", <Svg w={17} h={17}><path d="M1 16C1 8 8 1 16 1M5 16C5 10 10 5 16 5M9 16c0-4 3-7 7-7" opacity=".8" /><circle cx="14.500" cy="14.500" r="1.800" fill="currentColor" stroke="none" /></Svg>],
  ["Volume", <Svg w={20} h={18}><path d="M1 6h3l4-4v14l-4-4H1zM11 6.500c1 1.500 1 3.500 0 5M14 4.500c2 2.500 2 6.500 0 9" /><path d="M17 2.500c3 4 3 9 0 13" opacity=".5" /></Svg>],
];
const TriLeft = () => <path d="M8 0v9L2.500 4.500z" />;

export default function App() {
  return (
    <>
      <Global />
      <Page>
        <TitleBar>
          <AppBadge><TableauMark size={16} mono="#4a8db5" /></AppBadge>
          <span>Tableau - Book3</span>
          <WindowButtons>
            <WindowButton aria-label="Minimize"><Svg w={12} color="#000"><path d="M0 6h12" /></Svg></WindowButton>
            <WindowButton aria-label="Restore"><Svg w={13} color="#000"><path d="M1 3.500h8.500V12H1zM3.500 3V1H12v8.500H9.500" /></Svg></WindowButton>
            <WindowButton aria-label="Close"><Svg w={13} color="#000"><path d="m1 1 11 11M12 1 1 12" /></Svg></WindowButton>
          </WindowButtons>
        </TitleBar>
        <MenuBar>
          {["File", "Data", "Worksheet", "Dashboard", "Story", "Analysis", "Map", "Format", "Server", "Window", "Help"].map((m) => <MenuItem key={m}>{m}</MenuItem>)}
        </MenuBar>
        <Toolbar>
          {tools.map((t) => <Tool key={t[0]} item={t} />)}
          <FitBox>
            <PlainSelect aria-label="Fit" defaultValue="Standard"><option>Standard</option></PlainSelect>
            <SelectCaret><Caret w={8} /></SelectCaret>
          </FitBox>
          <Sep />
          {tools2.map((t) => <Tool key={t[0]} item={t} />)}
        </Toolbar>

        <Body>
          <DataPane>
            <PaneTabs>
              <PaneTab>Data</PaneTab>
              <PaneTabOff>Analytics<Svg w={8} h={10} color="#555"><path d="M6.500 1 2 5l4.500 4" /></Svg></PaneTabOff>
            </PaneTabs>
            <SourceRow>
              <Svg w={14} h={16} color="#666"><path d="M1 3v9c0 1 1.500 2 4 2M10 3v4" /><ellipse cx="5.500" cy="3" rx="4.500" ry="2.200" /><circle cx="10" cy="12" r="3.800" fill="#38809f" stroke="none" /><path d="m8.300 12 1.300 1.200 2-2.400" stroke="#fff" strokeWidth="1" /></Svg>
              adult (adult1)
            </SourceRow>
            <SearchRow>
              <SearchBox>
                <SearchInput aria-label="Search fields" placeholder="Search" />
                <Svg w={10} color="#555"><circle cx="6" cy="4" r="3.200" /><path d="M3.500 6.500.5 9.500" /></Svg>
              </SearchBox>
              <SmallIconButton $w={22} aria-label="Filter fields"><Svg w={14} h={13}><path d="M1 1h12L8.500 6v6l-3-1.500V6z" /></Svg></SmallIconButton>
              <SmallIconButton $w={25} $line aria-label="View"><Svg w={12} h={10} sw={1} color="#444"><path d="M0 .5h12M0 2.500h12M0 4.500h12M0 6.500h12M0 8.500h12" strokeDasharray="2.250 1" /></Svg></SmallIconButton>
              <SmallIconButton $w={14} aria-label="View options"><Caret w={7} /></SmallIconButton>
            </SearchRow>
            <TablesHeading>Tables</TablesHeading>
            <Fields items={dimensions} />
            <Fields items={measures} m />
          </DataPane>

          <Cards>
            <Card $h={70}><CardTitle>Pages</CardTitle></Card>
            <Card $h={92}>
              <CardTitle>Filters</CardTitle>
              <FilterPill>Workclass: Private</FilterPill>
            </Card>
            <Card $h={315}>
              <CardTitle>Marks</CardTitle>
              <MarksBody>
                <MarkBox>
                  <Svg w={10} color="#999"><circle cx="5" cy="5" r="4.300" /><path d="M5 1v4h4" /></Svg>
                  <PlainSelect aria-label="Mark type" defaultValue="Pie"><option>Pie</option></PlainSelect>
                  <SelectCaret><Caret w={7} /></SelectCaret>
                </MarkBox>
                <MarkGrid>
                  {markButtons.map(([n, icon]) => <MarkButton key={n}>{icon}{n}</MarkButton>)}
                </MarkGrid>
                <Encodings>
                  <Encoding><Dots w={14} /><Pill>Income</Pill></Encoding>
                  <Encoding><AngleIcon w={14} /><Pill $green>CNT(adult)</Pill></Encoding>
                  <Encoding><SizeIcon w={15} /><Pill $green>CNT(adult)</Pill></Encoding>
                </Encodings>
              </MarksBody>
            </Card>
          </Cards>

          <Work>
            <Shelf>
              <ShelfLabel><Svg w={12} h={12} color="#555" sw={2}><path d="M2 0v2M6 0v2M10 0v2M2 3.500V12M6 3.500V12M10 3.500V12" /></Svg>Columns</ShelfLabel>
            </Shelf>
            <Shelf>
              <ShelfLabel><Svg w={12} h={12} color="#555" sw={2}><path d="M0 2h2M0 6h2M0 10h2M3.500 2H12M3.500 6H12M3.500 10H12" /></Svg>Rows</ShelfLabel>
              <ShelfPill>Workclass</ShelfPill>
            </Shelf>
            <Canvas>
              <SheetTitle>Find and Plot Income class of people who have private jobs</SheetTitle>
              <Viz>
                <VizHeader>Workclass</VizHeader>
                <VizRow>
                  <VizLabel>Private</VizLabel>
                  <svg width="162" height="159" viewBox="0 0 162 159" role="img" aria-label="Income pie">
                    <path d={sliceOf(81, 79, 74, lowAngle, 360)} fill="#f28e2b" />
                    <path d={sliceOf(81, 79, 74, 0, lowAngle)} fill="#4e79a7" stroke="#111" strokeWidth="1.500" />
                    <text x="1" y="17" fontSize="16" fill="#000">{counts.high.toLocaleString("en-US")}</text>
                    <text x="160" y="153" fontSize="16" fill="#000" textAnchor="end">{counts.low.toLocaleString("en-US")}</text>
                  </svg>
                </VizRow>
                <Tip>
                  <TipKey>Income:</TipKey><TipValue>&lt;=50K</TipValue>
                  <TipKey>Workclass:</TipKey><TipValue>Private</TipValue>
                  <TipKey>Count of adult:</TipKey><TipValue>26,519</TipValue>
                </Tip>
              </Viz>
            </Canvas>
          </Work>
        </Body>

        <SheetTabs>
          <SheetTab $w={163} $start><Svg w={9} h={13}><path d="M1 2.500v8c0 2 7 2 7 0v-8" /><ellipse cx="4.500" cy="2.500" rx="3.500" ry="1.700" /></Svg>Data Source</SheetTab>
          {[1, 2, 3, 4, 5, 6].map((n) => <SheetTab key={n} $w={70}>Sheet {n}</SheetTab>)}
          <SheetTab $w={69} $on>Sheet 7</SheetTab>
          <SheetTab $w={32} aria-label="New worksheet"><Svg w={16}><path d="M8 12.500H1.500v-11h11V7M4.500 10V7.500M7 10V5.500M9.500 8V5" /><path d="M8 12h8M12 8v8" strokeWidth="2" /></Svg></SheetTab>
          <SheetTab $w={32} aria-label="New dashboard"><Svg w={16}><path d="M8 12.500H1.500v-11h11V7M7 1.500v11M1.500 7h11" /><path d="M8 12h8M12 8v8" strokeWidth="2" /></Svg></SheetTab>
          <SheetTab $w={32} aria-label="New story"><Svg w={16}><path d="M8 12.500H5.500L1.500 11V1l4 2h3.500l3.500-2v6M5.500 3v9" /><path d="M8 12h8M12 8v8" strokeWidth="2" /></Svg></SheetTab>
        </SheetTabs>
        <StatusBar>
          <span>2 marks</span><span>1 row by 1 column</span><span>SUM of CNT(adult): 33,906</span>
          <StatusCells>
            <StatusCell $w={157} /><StatusCell $w={32} /><StatusCell $w={32} /><StatusCell $w={57} />
            <StatusCell $w={71}>
              <Svg w={9} fill="currentColor" stroke="none"><path d="M0 0h1.500v9H0z" /><TriLeft /></Svg>
              <Svg w={9} fill="currentColor" stroke="none"><TriLeft /></Svg>
              <Svg w={9} fill="currentColor" stroke="none"><path d="M1 0v9l5.500-4.500z" /></Svg>
              <Svg w={9} fill="currentColor" stroke="none"><path d="M1 0v9l5.500-4.500zM7 0h1.500v9H7z" /></Svg>
            </StatusCell>
            <StatusCell $w={70} $spread>
              <Svg w={11} sw={3}><path d="M0 1.500h11M0 5.500h11M0 9.500h11" strokeDasharray="3 1" /></Svg>
              <Svg w={11} sw={3}><path d="M0 3.500h11" strokeWidth="7" /><path d="M0 9.500h11" strokeDasharray="3 1" /></Svg>
              <Svg w={11} color="#666" fill="currentColor" stroke="none"><path d="M0 0h11v11H0z" /></Svg>
            </StatusCell>
          </StatusCells>
        </StatusBar>

        <Taskbar>
          <StartButton aria-label="Start"><svg width="20" height="20" viewBox="0 0 20 20" fill="#fff" aria-hidden="true"><path d="M0 3l8-1.200v7.700H0zM9 1.600 20 0v9.500H9zM0 10.500h8v7.700L0 17zM9 10.500h11V20L9 18.400z" /></svg></StartButton>
          <TaskSearch>
            <Svg w={20} color="#111" sw={1.500}><circle cx="12" cy="8" r="7" /><path d="m7 13-6.500 6.500" /></Svg>
            <TaskInput aria-label="Windows search" placeholder="Type here to search" />
            <Concert />
          </TaskSearch>
          {apps.map(([n, icon, run, on]) => <TaskApp key={n} aria-label={n} $run={run} $on={on}>{icon}</TaskApp>)}
          <Tray>
            <Weather>
              <svg width="26" height="26" viewBox="0 0 26 26" aria-hidden="true"><path d="M15 1c12 5 12 20 1 24-7 2-13-3-14-8 10 4 17-6 13-16z" fill="#ffd20a" /><path d="M3 11q-3-1-2-4 2-2 3-1 1-5 5-3 3 1 2 4 2 3-1 4z" fill="#cfe6f8" /></svg>
              <span>26°C</span><span>Mostly clear</span>
            </Weather>
            {trayIcons.map(([n, icon]) => <TrayIcon key={n} aria-label={n}>{icon}</TrayIcon>)}
            <TrayText $w={48} $size={15}>ENG<br />IN</TrayText>
            <TrayText $w={80} $size={15}>11:28 PM<br />5/14/2022</TrayText>
            <Notify aria-label="3 notifications">
              <svg width="32" height="32" viewBox="0 0 32 32" aria-hidden="true">
                <path d="M1 1h20v17H9l-4 4v-4H1z" fill="#fff" /><path d="M4 5.500h14M4 9.500h14M4 13.500h9" stroke="#26333a" strokeWidth="1.300" />
                <circle cx="21" cy="21" r="10" fill="#3a4448" stroke="#9aa1a4" /><text x="21" y="26" fontSize="14" fontWeight="600" fill="#fff" textAnchor="middle">3</text>
              </svg>
            </Notify>
          </Tray>
        </Taskbar>

        <ShowMe>
          <ShowMeTab>
            <svg width="14" height="15" viewBox="0 0 14 15" aria-hidden="true"><path d="M0 0h11v3H0z" fill="#866f9c" /><path d="M0 4h14v3H0z" fill="#7fa5cf" /><path d="M0 8h5v3H0z" fill="#f3a57d" /><path d="M0 12h8v3H0z" fill="#fc7480" /></svg>
            Show Me
          </ShowMeTab>
          <ShowMePanel>
            <ThumbGrid>
              {thumbs.map(([n, art]) => (
                <Thumb key={n} aria-label={n} $on={n === "Horizontal bars"}>
                  <svg width="69" height="52" viewBox="0 0 207 156" aria-hidden="true">{art}</svg>
                </Thumb>
              ))}
            </ThumbGrid>
            <Hint $h={28}><span>For <b>horizontal bars</b> try</span></Hint>
            <Hint>0 or more <Pill $end={17}>Dimensions</Pill></Hint>
            <Hint>1 or more <Pill $green $end={17}>Measures</Pill></Hint>
          </ShowMePanel>
        </ShowMe>
      </Page>
    </>
  );
}
